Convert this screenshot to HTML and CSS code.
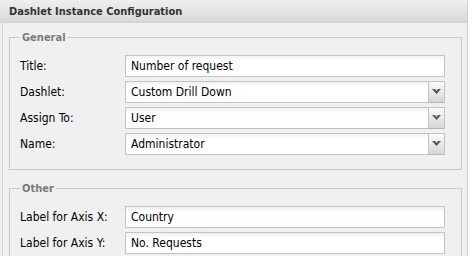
FILE: index.html
```html
<!DOCTYPE html>
<html lang="en">
  <head>
    <meta charset="UTF-8" />
    <title>Dashlet Instance Configuration</title>
    <link rel="stylesheet" href="styles.css">
  </head>
  <body>
    <div class="window">
      <div class="window-header">Dashlet Instance Configuration</div>
      <div class="window-body">
        <!-- Ogólne -->
        <fieldset class="group">
          <legend>General</legend>
          <div class="field-row">
            <label>Title:</label>
            <div class="text-field">Number of request</div>
          </div>
          <div class="field-row">
            <label>Dashlet:</label>
            <div class="combo">
              <div class="text-field">Custom Drill Down</div>
              <div class="trigger"><svg width="9" height="6" viewBox="0 0 9 6"><path d="M0 0h3l1.5 2 1.5-2h3l-4.5 5z" fill="#555"/></svg></div>
            </div>
          </div>
          <div class="field-row">
            <label>Assign To:</label>
            <div class="combo">
              <div class="text-field">User</div>
              <div class="trigger"><svg width="9" height="6" viewBox="0 0 9 6"><path d="M0 0h3l1.5 2 1.5-2h3l-4.5 5z" fill="#555"/></svg></div>
            </div>
          </div>
          <div class="field-row">
            <label>Name:</label>
            <div class="combo">
              <div class="text-field">Administrator</div>
              <div class="trigger"><svg width="9" height="6" viewBox="0 0 9 6"><path d="M0 0h3l1.5 2 1.5-2h3l-4.5 5z" fill="#555"/></svg></div>
            </div>
          </div>
        </fieldset>

        <!-- Pozostałe -->
        <fieldset class="group">
          <legend>Other</legend>
          <div class="field-row">
            <label>Label for Axis X:</label>
            <div class="text-field">Country</div>
          </div>
          <div class="field-row">
            <label>Label for Axis Y:</label>
            <div class="text-field">No. Requests</div>
          </div>
        </fieldset>
      </div>
    </div>
  </body>
</html>
```

FILE: styles.css
```css
body {
  margin: 0;
  background: #fff;
  font-family: "DejaVu Sans Condensed", "Liberation Sans", sans-serif;
  font-size: 12px;
  color: #000;
  overflow: hidden;
}

.window {
  width: 467px;
  height: 256px;
  overflow: hidden;
  background: #f0f0f0;
  border-right: 1px solid #d0d0d0;
}

.window-header {
  height: 23px;
  line-height: 23px;
  padding-left: 9px;
  font-size: 11px;
  font-weight: bold;
  color: #333;
  background: linear-gradient(#efefef, #d8d8d8);
  border-bottom: 1px solid #d0d0d0;
  box-sizing: border-box;
}

.window-body {
  margin-left: 2px;
  border-left: 1px solid #d0d0d0;
  padding: 8px 5px 0 6px;
  height: 240px;
}

.group {
  margin: 0 0 12px 0;
  padding: 11px 15px 14px 10px;
  border: 1px solid #c8c8c8;
}

.group legend {
  padding: 0 2px;
  font-size: 11px;
  font-weight: bold;
  color: #7a7a7a;
  line-height: 13px;
}

.field-row {
  display: flex;
  align-items: center;
  height: 22px;
  margin-bottom: 4px;
}

.field-row:last-child {
  margin-bottom: 0;
}

.field-row label {
  width: 105px;
  flex: none;
}

.text-field {
  width: 320px;
  height: 22px;
  box-sizing: border-box;
  padding-left: 5px;
  line-height: 20px;
  border: 1px solid #c3c3c3;
  background: linear-gradient(#eef2f2, #fff 5px);
}

.combo {
  display: flex;
  width: 320px;
}

.combo .text-field {
  width: 303px;
  border-right: none;
}

.trigger {
  width: 17px;
  height: 22px;
  box-sizing: border-box;
  border: 1px solid #c3c3c3;
  border-bottom-color: #b4b0d0;
  background: linear-gradient(#fbfbfb, #d6d6d6);
  display: flex;
  align-items: center;
  justify-content: center;
}
```
